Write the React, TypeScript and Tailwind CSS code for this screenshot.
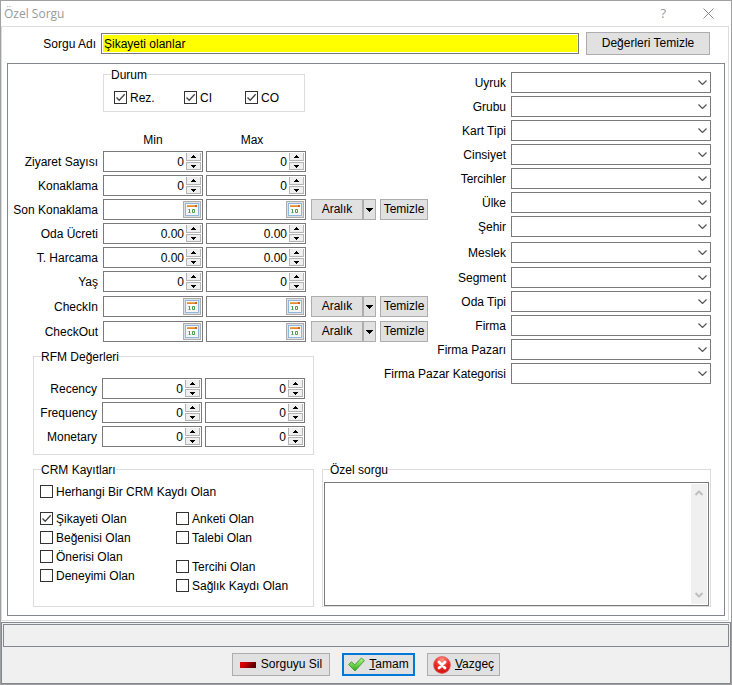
import { ReactNode, useState } from 'react';

const BUTTON = 'flex items-center justify-center border border-[#adadad] bg-[#e1e1e1]';

const countRows = [
  { label: 'Ziyaret Sayısı', value: '0' },
  { label: 'Konaklama', value: '0' },
];

const amountRows = [
  { label: 'Oda Ücreti', value: '0.00' },
  { label: 'T. Harcama', value: '0.00' },
  { label: 'Yaş', value: '0' },
];

const rfmRows = ['Recency', 'Frequency', 'Monetary'];

const guestSelects = ['Uyruk', 'Grubu', 'Kart Tipi', 'Cinsiyet', 'Tercihler', 'Ülke', 'Şehir'];
const companySelects = ['Segment', 'Oda Tipi', 'Firma', 'Firma Pazarı', 'Firma Pazar Kategorisi'];

const Caret = ({ up = false }: { up?: boolean }) => (
  <svg width="5" height="3" viewBox="0 0 5 3" shapeRendering="crispEdges">
    <path d={up ? 'M2 0h1v1h1v1h1v1H0V2h1V1h1z' : 'M0 0h5v1H4v1H3v1H2V2H1V1H0z'} fill="#000" />
  </svg>
);

const CalendarIcon = () => (
  <svg width="14" height="13" viewBox="0 0 14 13">
    <rect x="0.5" y="0.5" width="13" height="12" fill="#fff" stroke="#8fb6de" />
    <rect x="2" y="2" width="10" height="9" fill="#fdfdfb" stroke="#d5dbe2" strokeWidth="0.5" />
    <rect x="2" y="2" width="10" height="2" fill="#f0a850" />
    <rect x="2" y="3" width="10" height="1" fill="#e08a34" />
    <rect x="10" y="2" width="2" height="2" fill="#c9641c" />
    <path d="M4.5 6v4M3.5 9.5h2M3.5 6.5h1M7.5 6.5h2v3h-2z" fill="none" stroke="#4f9c4f" />
  </svg>
);

const NumberField = ({ label, value }: { label: string; value: string }) => {
  const [current, setCurrent] = useState(value);
  const decimals = value.includes('.') ? 2 : 0;
  const step = (amount: number) =>
    setCurrent((prev) => Math.max(0, Number(prev) + amount).toFixed(decimals));

  return (
    <div className="flex h-[21px] w-[100px] border border-[#7a7a7a] bg-white p-px">
      <input
        aria-label={label}
        value={current}
        onChange={(e) => setCurrent(e.target.value)}
        className="min-w-0 flex-1 pt-[2px] pr-[2px] text-right outline-none"
      />
      <div className="flex w-[15px] flex-col justify-between">
        <button
          aria-label={`${label} artır`}
          onClick={() => step(1)}
          className="flex h-2 items-center justify-center border border-t-0 border-[#b4b4b4] bg-[#efefef]"
        >
          <Caret up />
        </button>
        <button
          aria-label={`${label} azalt`}
          onClick={() => step(-1)}
          className="flex h-2 items-center justify-center border border-[#b4b4b4] bg-[#efefef]"
        >
          <Caret />
        </button>
      </div>
    </div>
  );
};

const DateField = ({ label }: { label: string }) => (
  <div className="flex h-[21px] w-[100px] border border-[#7a7a7a] bg-white p-px">
    <input aria-label={label} className="min-w-0 flex-1 px-[2px] outline-none" />
    <button
      aria-label={`${label} takvim`}
      className="flex w-[18px] items-center justify-center border border-[#adadad] bg-[#e1e1e1]"
    >
      <CalendarIcon />
    </button>
  </div>
);

const FormRow = ({ label, children }: { label: string; children: ReactNode }) => (
  <div className="flex h-[21px] items-center gap-[5px]">
    <span className="w-[90px] shrink-0 pt-[2px] text-right whitespace-nowrap">{label}</span>
    <div className="flex items-center gap-[3px]">{children}</div>
  </div>
);

const NumberRow = ({ label, value }: { label: string; value: string }) => (
  <FormRow label={label}>
    <NumberField label={`${label} min`} value={value} />
    <NumberField label={`${label} max`} value={value} />
  </FormRow>
);

const DateRow = ({ label }: { label: string }) => (
  <FormRow label={label}>
    <DateField label={`${label} min`} />
    <DateField label={`${label} max`} />
    <div className="flex gap-1 pl-[2px]">
      <div className="flex">
        <button className={`${BUTTON} h-[21px] w-[52px]`}>Aralık</button>
        <button aria-label={`${label} aralık seç`} className={`${BUTTON} h-[21px] w-[13px]`}>
          <svg width="7" height="4" viewBox="0 0 7 4" shapeRendering="crispEdges">
            <path d="M0 0h7v1H6v1H5v1H4v1H3V3H2V2H1V1H0z" fill="#000" />
          </svg>
        </button>
      </div>
      <button className={`${BUTTON} h-[21px] w-12`}>Temizle</button>
    </div>
  </FormRow>
);

const SelectRow = ({ label }: { label: string }) => (
  <label className="flex items-center justify-end gap-[5px]">
    <span className="pt-[2px] whitespace-nowrap">{label}</span>
    <span className="grid w-[200px]">
      <select className="col-start-1 row-start-1 h-[21px] appearance-none border border-[#7a7a7a] bg-white px-1 outline-none">
        <option value=""></option>
      </select>
      <svg
        width="9"
        height="5"
        viewBox="0 0 9 5"
        className="pointer-events-none col-start-1 row-start-1 mr-1 self-center justify-self-end"
      >
        <path d="M0.5 0.5l4 4 4-4" fill="none" stroke="#555" strokeWidth="1.2" />
      </svg>
    </span>
  </label>
);

const CheckBox = ({ label, checked = false }: { label: string; checked?: boolean }) => (
  <label className="flex h-[15px] items-center gap-[3px] whitespace-nowrap">
    <span className="grid size-[13px] shrink-0">
      <input
        type="checkbox"
        defaultChecked={checked}
        className="peer col-start-1 row-start-1 size-[13px] appearance-none border border-[#333] bg-white"
      />
      <svg
        width="13"
        height="13"
        viewBox="0 0 13 13"
        className="pointer-events-none invisible col-start-1 row-start-1 peer-checked:visible"
      >
        <path d="M2.5 6.5l2.7 2.8 5.5-6" fill="none" stroke="#444" strokeWidth="1.3" />
      </svg>
    </span>
    <span className="pt-[2px]">{label}</span>
  </label>
);

const Group = ({ title, className, children }: { title: string; className: string; children: ReactNode }) => (
  <fieldset className={`min-w-0 border border-[#dcdcdc] ${className}`}>
    <legend className="ml-[7px] h-[15px] pt-px leading-[15px]">{title}</legend>
    {children}
  </fieldset>
);

const App = () => {
  const [name, setName] = useState('Şikayeti olanlar');

  return (
    <div className="flex min-h-screen flex-col border border-[#a0a0a0] bg-white font-['Liberation_Sans',Arial,sans-serif] text-[12px] leading-[15px] text-black">
      <header className="flex h-[25px] items-center justify-between pr-[17px] pl-[3px] text-[#999]">
        <h1 className="font-['Open_Sans',sans-serif] text-[12px]">Özel Sorgu</h1>
        <div className="flex items-center gap-[37px]">
          <button aria-label="Yardım" className="font-['Open_Sans',sans-serif] text-[13px]">
            ?
          </button>
          <button aria-label="Kapat">
            <svg width="11" height="11" viewBox="0 0 11 11">
              <path d="M0.5 0.5l10 10M10.5 0.5l-10 10" stroke="#888" strokeWidth="1" />
            </svg>
          </button>
        </div>
      </header>

      <main className="mr-[2px] border border-[#dcdcdc] pt-[5px] pr-[3px] pb-1 pl-[5px]">
        <div className="flex items-center gap-[7px] pr-[15px] pb-2">
          <label className="flex flex-1 items-center gap-[5px]">
            <span className="w-[89px] pt-[2px] text-right">Sorgu Adı</span>
            <input
              value={name}
              onChange={(e) => setName(e.target.value)}
              className="h-[21px] min-w-0 flex-1 border border-[#7a7a7a] bg-[#ffff00] px-[2px] ring-1 ring-white outline-none ring-inset"
            />
          </label>
          <button className={`${BUTTON} h-[23px] w-[124px]`}>Değerleri Temizle</button>
        </div>

        <div className="border border-[#828790] pb-2">
          {/* Both columns share one cell, the long select labels reach under the date buttons */}
          <div className="grid pr-[13px]">
            <div className="col-start-1 row-start-1 justify-self-start pt-[3px]">
              <Group title="Durum" className="ml-[95px] w-[202px]">
                <div className="grid grid-cols-[70px_61px_auto] pt-2 pb-[6px] pl-[10px]">
                  <CheckBox label="Rez." checked />
                  <CheckBox label="CI" checked />
                  <CheckBox label="CO" checked />
                </div>
              </Group>

              <div className="mt-5 ml-[95px] flex h-[19px] gap-[3px] pt-px text-center">
                <span className="w-[100px]">Min</span>
                <span className="w-[92px]">Max</span>
              </div>

              <div className="flex flex-col gap-1">
                <div className="flex flex-col gap-[3px]">
                  {countRows.map((row) => (
                    <NumberRow key={row.label} {...row} />
                  ))}
                  <DateRow label="Son Konaklama" />
                  {amountRows.map((row) => (
                    <NumberRow key={row.label} {...row} />
                  ))}
                </div>
                <DateRow label="CheckIn" />
                <DateRow label="CheckOut" />
              </div>

              <Group title="RFM Değerleri" className="mt-[7px] ml-[25px] w-[281px]">
                <div className="flex flex-col gap-[3px] pt-[14px] pb-[7px]">
                  {rfmRows.map((label) => (
                    <div key={label} className="flex items-center gap-[3px]">
                      <span className="w-[65px] pt-[2px] pr-[2px] text-right">{label}</span>
                      <NumberField label={`${label} min`} value="0" />
                      <NumberField label={`${label} max`} value="0" />
                    </div>
                  ))}
                </div>
              </Group>
            </div>

            <div className="col-start-1 row-start-1 self-start justify-self-end pt-2">
              <div className="flex flex-col gap-[3px]">
                {guestSelects.map((label) => (
                  <SelectRow key={label} label={label} />
                ))}
              </div>
              <div className="mt-[5px]">
                <SelectRow label="Meslek" />
              </div>
              <div className="mt-1 flex flex-col gap-[3px]">
                {companySelects.map((label) => (
                  <SelectRow key={label} label={label} />
                ))}
              </div>
            </div>
          </div>

          <div className="mt-[7px] flex gap-2 pr-[13px] pl-[25px]">
            <Group title="CRM Kayıtları" className="w-[281px] shrink-0">
              <div className="flex flex-col gap-3 pt-[7px] pb-[13px] pl-[6px]">
                <CheckBox label="Herhangi Bir CRM Kaydı Olan" />
                <div className="grid grid-cols-[136px_auto]">
                  <div className="flex flex-col gap-1">
                    <CheckBox label="Şikayeti Olan" checked />
                    <CheckBox label="Beğenisi Olan" />
                    <CheckBox label="Önerisi Olan" />
                    <CheckBox label="Deneyimi Olan" />
                  </div>
                  <div className="flex flex-col gap-[14px]">
                    <div className="flex flex-col gap-1">
                      <CheckBox label="Anketi Olan" />
                      <CheckBox label="Talebi Olan" />
                    </div>
                    <div className="flex flex-col gap-1">
                      <CheckBox label="Tercihi Olan" />
                      <CheckBox label="Sağlık Kaydı Olan" />
                    </div>
                  </div>
                </div>
              </div>
            </Group>

            <Group title="Özel sorgu" className="flex-1">
              <div className="mx-px mt-[5px] flex h-[124px] border border-[#7a7a7a] p-px">
                <textarea aria-label="Özel sorgu" className="min-w-0 flex-1 resize-none px-[2px] outline-none" />
                <div className="flex w-4 flex-col items-center justify-between bg-[#f0f0f0] py-[6px]">
                  <svg width="8" height="6" viewBox="0 0 8 6">
                    <path d="M0.5 5l3.5-3.5L7.5 5" fill="none" stroke="#bfbfbf" strokeWidth="2" />
                  </svg>
                  <svg width="8" height="6" viewBox="0 0 8 6">
                    <path d="M0.5 1l3.5 3.5L7.5 1" fill="none" stroke="#bfbfbf" strokeWidth="2" />
                  </svg>
                </div>
              </div>
            </Group>
          </div>
        </div>
      </main>

      <footer className="mt-px flex flex-1 flex-col border border-[#828790] bg-[#f0f0f0] p-px">
        <div className="h-[23px] border border-[#828790]" />
        <div className="flex justify-center gap-3 py-[6px]">
          <button className={`${BUTTON} h-[23px] w-[98px] gap-[5px]`}>
            <svg width="16" height="6" viewBox="0 0 16 6">
              <defs>
                <linearGradient id="bar" x1="0" x2="1" y1="0" y2="0.3">
                  <stop offset="0" stopColor="#f00000" />
                  <stop offset="0.4" stopColor="#c80000" />
                  <stop offset="1" stopColor="#5c0000" />
                </linearGradient>
              </defs>
              <rect width="16" height="6" fill="url(#bar)" />
            </svg>
            Sorguyu Sil
          </button>
          <button className="flex h-[23px] w-[73px] items-center justify-center gap-1 border-2 border-[#0078d7] bg-[#e1e1e1]">
            <svg width="17" height="15" viewBox="0 0 17 15">
              <defs>
                <linearGradient id="tick" x1="0" x2="0" y1="0" y2="1">
                  <stop offset="0" stopColor="#b8f294" />
                  <stop offset="0.5" stopColor="#6fd44f" />
                  <stop offset="1" stopColor="#2fa51f" />
                </linearGradient>
              </defs>
              <path
                d="M0.6 7.6L3.4 4.8l3.4 3L13.4 1l3 2.6L7 14z"
                fill="url(#tick)"
                stroke="#3c9a2c"
                strokeWidth="0.9"
                strokeLinejoin="round"
              />
            </svg>
            <span>
              <u>T</u>amam
            </span>
          </button>
          <button className={`${BUTTON} h-[23px] w-[73px] gap-1`}>
            <svg width="18" height="18" viewBox="0 0 18 18">
              <defs>
                <radialGradient id="stop" cx="0.5" cy="0.2" r="0.85">
                  <stop offset="0" stopColor="#ff9a8a" />
                  <stop offset="0.5" stopColor="#ee2a24" />
                  <stop offset="1" stopColor="#c41010" />
                </radialGradient>
              </defs>
              <circle cx="9" cy="9" r="8.4" fill="url(#stop)" stroke="#e06060" strokeWidth="0.8" />
              <path d="M6 6l6 6M12 6l-6 6" stroke="#fff" strokeWidth="2.8" strokeLinecap="round" />
            </svg>
            <span>
              <u>V</u>azgeç
            </span>
          </button>
        </div>
      </footer>
    </div>
  );
};

export default App;
